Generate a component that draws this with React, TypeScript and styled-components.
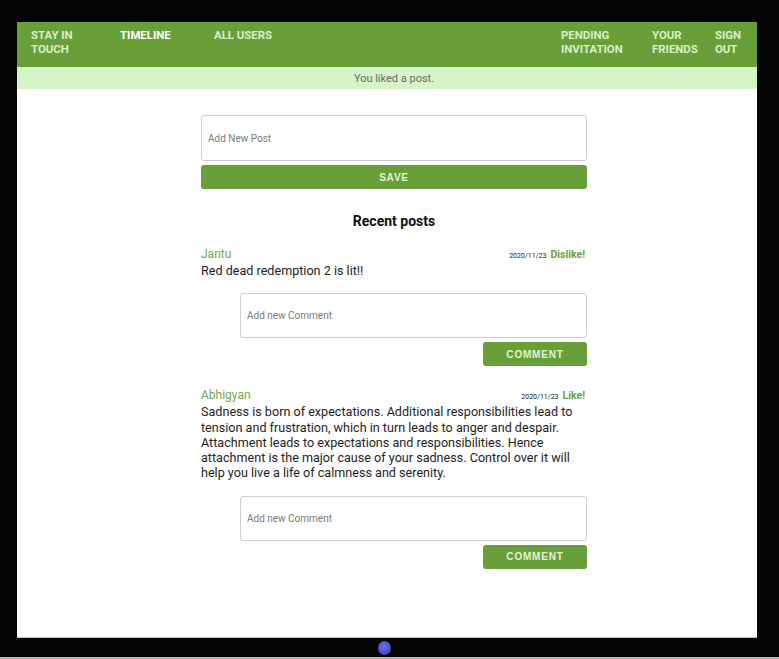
import React from "react";
import styled, { createGlobalStyle } from "styled-components";

const GREEN = "#689f38";

const Global = createGlobalStyle`
  html, body { margin: 0; padding: 0; background: #000; }
  body { font-family: Roboto, "Liberation Sans", sans-serif; }
  * { box-sizing: border-box; }
`;

const Device = styled.div`
  width: 779px;
  height: 659px;
  background: #050505;
  display: flex;
  flex-direction: column;
  padding-top: 22px;
`;

const Screen = styled.div`
  margin-left: 17px;
  width: 740px;
  height: 616px;
  background: #fff;
  border-bottom: 1px solid #c4c4c4;
  display: flex;
  flex-direction: column;
  overflow: hidden;
`;

const BottomBar = styled.div`
  height: 19px;
  display: flex;
  align-items: center;
  padding-left: 378px;
`;

const HomeButton = styled.div`
  width: 13px;
  height: 14px;
  border-radius: 50%;
  background: radial-gradient(circle at 45% 40%, #6a72ee 0%, #4a52d4 55%, #3a40a8 100%);
`;

const BottomEdge = styled.div`
  height: 2px;
  background: #b5b5b5;
`;

const Nav = styled.nav`
  height: 45px;
  background: ${GREEN};
  display: flex;
  align-items: flex-start;
  padding: 6px 12px 0 14px;
`;

const NavLink = styled.a<{ $w: number; $gap?: number; $active?: boolean; $push?: boolean }>`
  width: ${(p) => p.$w}px;
  margin-right: ${(p) => p.$gap || 0}px;
  margin-left: ${(p) => (p.$push ? "auto" : "0")};
  font-family: Roboto, "Liberation Sans", sans-serif;
  font-weight: 700;
  font-size: 11.4px;
  line-height: 14px;
  text-transform: uppercase;
  color: ${(p) => (p.$active ? "#ffffff" : "#dcefc6")};
  text-decoration: none;
  flex-shrink: 0;
`;

const Banner = styled.div`
  height: 22px;
  background: #d5f5c9;
  color: #6b6b6b;
  font-size: 11px;
  display: flex;
  align-items: center;
  justify-content: center;
  padding-left: 14px;
`;

const Column = styled.main`
  width: 386px;
  margin-left: 184px;
  padding-top: 26px;
  display: flex;
  flex-direction: column;
`;

const TextBox = styled.div<{ $indent?: number }>`
  height: ${(p) => (p.$indent ? 45 : 46)}px;
  margin-left: ${(p) => p.$indent || 0}px;
  border: 1px solid #cfcfcf;
  border-radius: 3px;
  display: flex;
  align-items: center;
  padding-left: 6px;
  font-size: 10px;
  color: #7a7a7a;
`;

const Button = styled.button<{ $w?: number }>`
  height: 24px;
  width: ${(p) => (p.$w ? `${p.$w}px` : "100%")};
  align-self: flex-end;
  margin-top: 4px;
  border: none;
  border-radius: 3px;
  background: ${GREEN};
  color: #e3f4d6;
  font-family: "Liberation Sans", Arial, sans-serif;
  font-weight: 700;
  font-size: 10px;
  letter-spacing: 0.8px;
  padding: 0;
  text-transform: uppercase;
`;

const Heading = styled.h2`
  margin: 24px 0 17px;
  text-align: center;
  font-size: 14px;
  line-height: 17px;
  font-weight: 700;
  color: #111;
`;

const Post = styled.article`
  display: flex;
  flex-direction: column;
  margin-bottom: 22px;
`;

const PostHead = styled.div`
  display: flex;
  align-items: baseline;
  height: 16px;
`;

const Author = styled.span`
  font-size: 12px;
  color: #72a94c;
  flex: 1;
`;

const DateText = styled.span`
  font-size: 7px;
  color: #222;
  margin-right: 4px;
`;

const LikeLink = styled.span`
  font-size: 10.5px;
  font-weight: 700;
  color: #6aa43e;
  margin-right: 2px;
`;

const Body = styled.p`
  margin: 0 0 15px;
  font-size: 12.6px;
  line-height: 15.25px;
  color: #1e1e1e;
`;

const posts = [
  {
    author: "Jantu",
    date: "2020/11/23",
    action: "Dislike!",
    text: "Red dead redemption 2 is lit!!",
  },
  {
    author: "Abhigyan",
    date: "2020/11/23",
    action: "Like!",
    text:
      "Sadness is born of expectations. Additional responsibilities lead to tension and frustration, which in turn leads to anger and despair. Attachment leads to expectations and responsibilities. Hence attachment is the major cause of your sadness. Control over it will help you live a life of calmness and serenity.",
  },
];

export default function App() {
  return (
    <>
      <Global />
      <Device>
        <Screen>
          <Nav>
            <NavLink $w={50} $gap={39}>Stay in Touch</NavLink>
            <NavLink $w={94} $active>Timeline</NavLink>
            <NavLink $w={80}>All Users</NavLink>
            <NavLink $w={91} $push>Pending Invitation</NavLink>
            <NavLink $w={63}>Your Friends</NavLink>
            <NavLink $w={30}>Sign Out</NavLink>
          </Nav>
          <Banner>You liked a post.</Banner>
          <Column>
            <TextBox>Add New Post</TextBox>
            <Button>Save</Button>
            <Heading>Recent posts</Heading>
            {posts.map((p) => (
              <Post key={p.author}>
                <PostHead>
                  <Author>{p.author}</Author>
                  <DateText>{p.date}</DateText>
                  <LikeLink>{p.action}</LikeLink>
                </PostHead>
                <Body>{p.text}</Body>
                <TextBox $indent={39}>Add new Comment</TextBox>
                <Button $w={104}>Comment</Button>
              </Post>
            ))}
          </Column>
        </Screen>
        <BottomBar>
          <HomeButton />
        </BottomBar>
        <BottomEdge />
      </Device>
    </>
  );
}
